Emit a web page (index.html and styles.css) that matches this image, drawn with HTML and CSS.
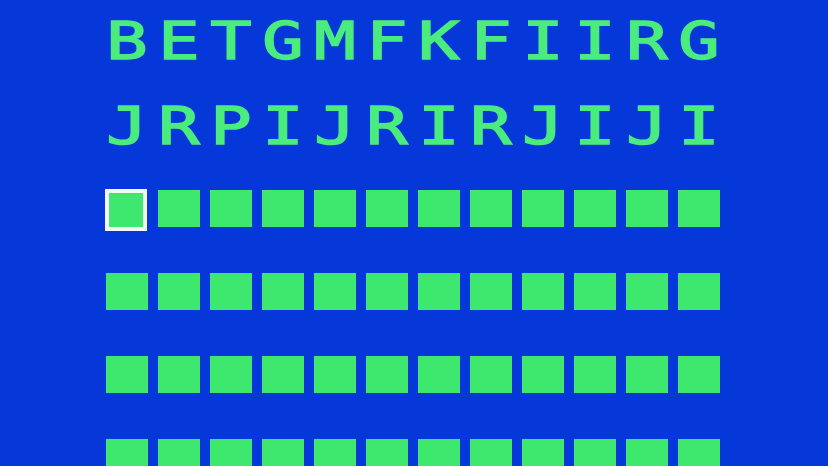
FILE: index.html
```html
<!DOCTYPE html>
<html>
<head>
<meta charset="utf-8">
<link rel="stylesheet" href="styles.css">
</head>
<body>
<div class="screen">
  <div class="row letters">
    <span>B</span><span>E</span><span>T</span><span>G</span><span>M</span><span>F</span><span>K</span><span>F</span><span>I</span><span>I</span><span>R</span><span>G</span>
  </div>
  <div class="row letters second">
    <span>J</span><span>R</span><span>P</span><span>I</span><span>J</span><span>R</span><span>I</span><span>R</span><span>J</span><span>I</span><span>J</span><span>I</span>
  </div>
  <div class="row blocks">
    <i class="sel"></i><i></i><i></i><i></i><i></i><i></i><i></i><i></i><i></i><i></i><i></i><i></i>
  </div>
  <div class="row blocks">
    <i></i><i></i><i></i><i></i><i></i><i></i><i></i><i></i><i></i><i></i><i></i><i></i>
  </div>
  <div class="row blocks">
    <i></i><i></i><i></i><i></i><i></i><i></i><i></i><i></i><i></i><i></i><i></i><i></i>
  </div>
  <div class="row blocks">
    <i></i><i></i><i></i><i></i><i></i><i></i><i></i><i></i><i></i><i></i><i></i><i></i>
  </div>
</div>
</body>
</html>
```
FILE: styles.css
```css
html, body {
  margin: 0;
  padding: 0;
  background: #0637d8;
  overflow: hidden;
}
.screen {
  width: 828px;
  height: 466px;
  box-sizing: border-box;
  padding: 22px 0 0 106px;
  display: flex;
  flex-direction: column;
  gap: 46px;
}
.row {
  display: grid;
  grid-template-columns: repeat(12, 42px);
  column-gap: 10px;
}
.letters {
  height: 38px;
  font-family: "DejaVu Sans Mono", monospace;
  font-weight: normal;
  font-size: 52px;
  line-height: 38px;
  color: #4aec7e;
  margin-bottom: 1px;
}
.letters.second {
  margin-bottom: -1px;
}
.letters span {
  display: block;
  text-align: center;
  transform: scaleX(1.32);
  -webkit-text-stroke: 1.5px #4aec7e;
}
.blocks {
  height: 37px;
}
.blocks i {
  display: block;
  background: #3ee86e;
  height: 37px;
}
.blocks i.sel {
  margin: -1px 0 -2px -1px;
  height: 34px;
  border: 4px solid #f4f8f4;
  box-sizing: content-box;
  width: 34px;
}
```
